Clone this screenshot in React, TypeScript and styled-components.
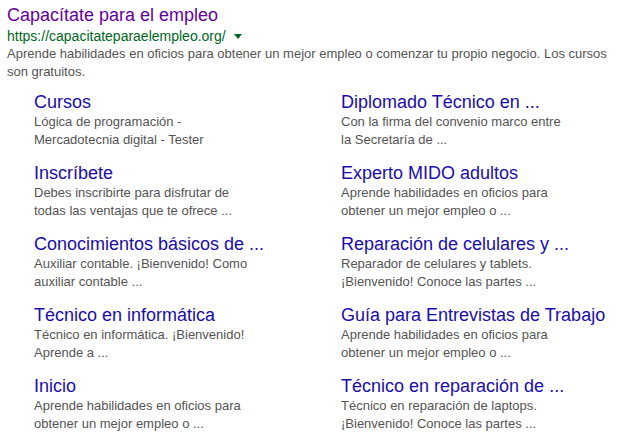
import styled, { createGlobalStyle } from "styled-components";

const GlobalStyle = createGlobalStyle`
  body {
    margin: 0;
    background: #fff;
    font-family: Arial, "Liberation Sans", sans-serif;
  }
`;

const sitelinks = [
    { title: "Cursos", lines: ["Lógica de programación -", "Mercadotecnia digital - Tester"] },
    { title: "Diplomado Técnico en ...", lines: ["Con la firma del convenio marco entre", "la Secretaría de ..."] },
    { title: "Inscríbete", lines: ["Debes inscribirte para disfrutar de", "todas las ventajas que te ofrece ..."] },
    { title: "Experto MIDO adultos", lines: ["Aprende habilidades en oficios para", "obtener un mejor empleo o ..."] },
    { title: "Conocimientos básicos de ...", lines: ["Auxiliar contable. ¡Bienvenido! Como", "auxiliar contable ..."] },
    { title: "Reparación de celulares y ...", lines: ["Reparador de celulares y tablets.", "¡Bienvenido! Conoce las partes ..."] },
    { title: "Técnico en informática", lines: ["Técnico en informática. ¡Bienvenido!", "Aprende a ..."] },
    { title: "Guía para Entrevistas de Trabajo", lines: ["Aprende habilidades en oficios para", "obtener un mejor empleo o ..."] },
    { title: "Inicio", lines: ["Aprende habilidades en oficios para", "obtener un mejor empleo o ..."] },
    { title: "Técnico en reparación de ...", lines: ["Técnico en reparación de laptops.", "¡Bienvenido! Conoce las partes ..."] }
];

const App = () => {
    return (
        <Result>
            <GlobalStyle />
            <Title href="#">Capacítate para el empleo</Title>
            <UrlRow>
                <Url>https://capacitateparaelempleo.org/</Url>
                <Arrow />
            </UrlRow>
            <Snippet>
                Aprende habilidades en oficios para obtener un mejor empleo o comenzar tu propio negocio. Los cursos son gratuitos.
            </Snippet>
            <Sitelinks>
                {sitelinks.map((obj, i) => (
                    <Sitelink key={i}>
                        <SitelinkTitle href="#">{obj.title}</SitelinkTitle>
                        <SitelinkText>
                            {obj.lines[0]}
                            <br />
                            {obj.lines[1]}
                        </SitelinkText>
                    </Sitelink>
                ))}
            </Sitelinks>
        </Result>
    );
};

export default App;

const Result = styled.div`
    padding: 4px 7px 0 7px;
    width: 610px;
`;

const Title = styled.a`
    display: block;
    font-size: 18px;
    line-height: 22px;
    color: #660099;
    text-decoration: none;
`;

const UrlRow = styled.div`
    display: flex;
    align-items: center;
    height: 18px;
    margin-top: 1px;
`;

const Url = styled.cite`
    font-style: normal;
    font-size: 14px;
    color: #006621;
`;

const Arrow = styled.span`
    width: 0;
    height: 0;
    margin-left: 8px;
    margin-top: 1px;
    border-left: 4px solid transparent;
    border-right: 4px solid transparent;
    border-top: 5px solid #006621;
`;

const Snippet = styled.div`
    font-size: 13px;
    line-height: 18.2px;
    color: #545454;
`;

const Sitelinks = styled.div`
    display: grid;
    grid-template-columns: 307px 1fr;
    row-gap: 13px;
    margin: 10px 0 0 27px;
`;

const Sitelink = styled.div`
    display: flex;
    flex-direction: column;
`;

const SitelinkTitle = styled.a`
    font-size: 18px;
    line-height: 22px;
    color: #1a0dab;
    text-decoration: none;
    white-space: nowrap;
`;

const SitelinkText = styled.div`
    font-size: 13px;
    line-height: 18px;
    color: #545454;
`;
